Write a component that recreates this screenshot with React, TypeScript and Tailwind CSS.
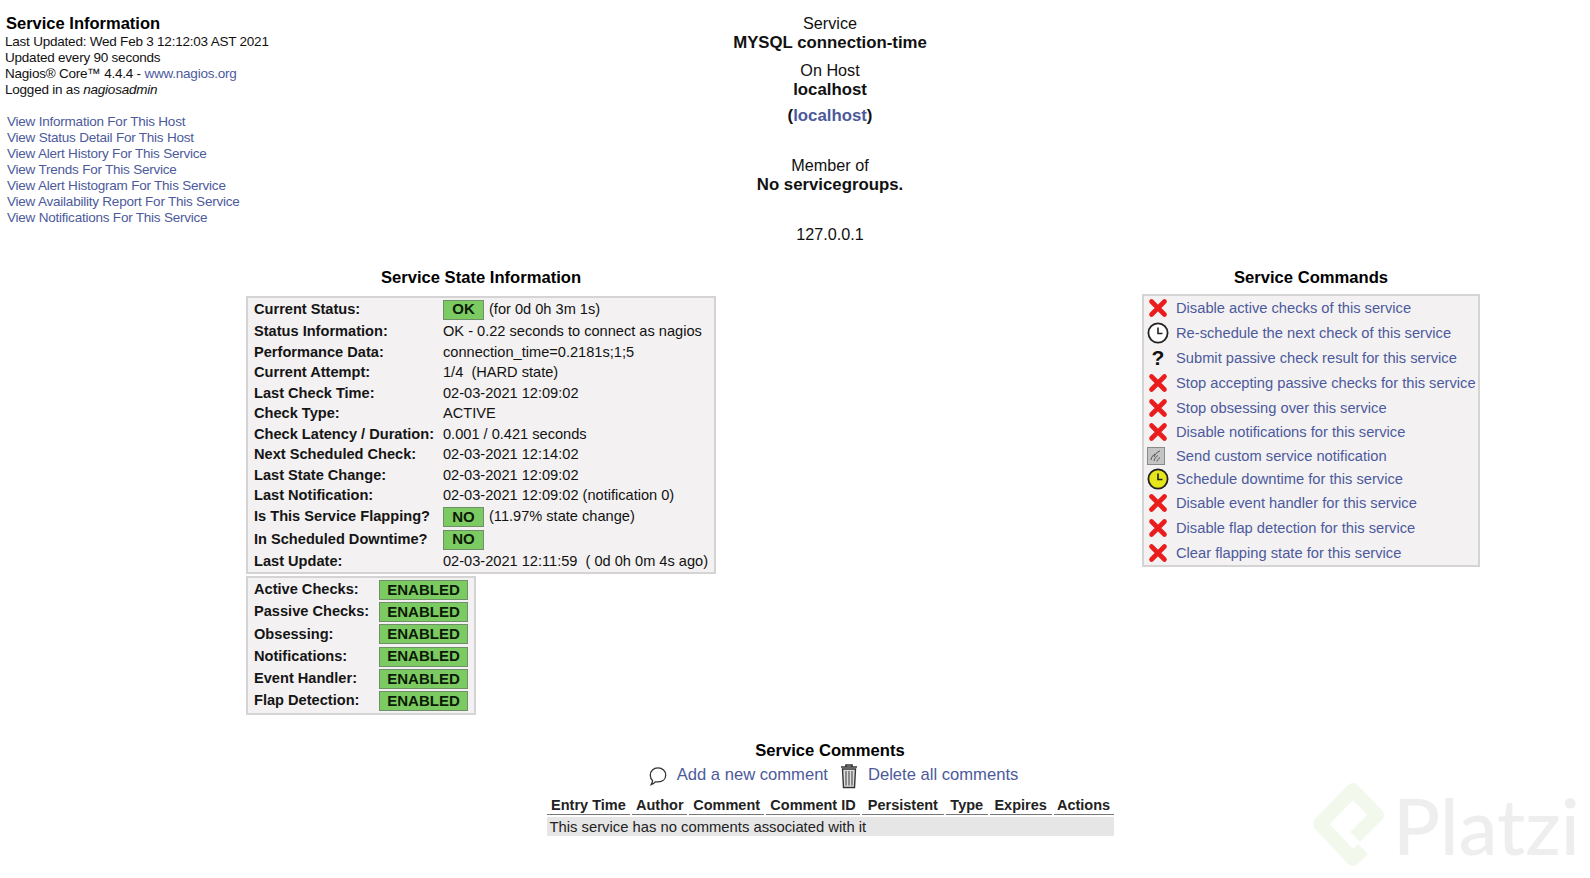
const linkColor = "text-[#4c5a9c]";

const infoLinks = [
  "View Information For This Host",
  "View Status Detail For This Host",
  "View Alert History For This Service",
  "View Trends For This Service",
  "View Alert Histogram For This Service",
  "View Availability Report For This Service",
  "View Notifications For This Service",
];

function Badge({ children, width }: { children: string; width: string }) {
  return (
    <span className={`${width} h-[20px] flex items-center justify-center bg-[#7ccb62] border border-[#6f8f68] font-bold text-[15px] text-[#0c1a08]`}>
      {children}
    </span>
  );
}

const stateRows = [
  { h: "h-[23px]", label: "Current Status:", badge: "OK", value: "(for 0d 0h 3m 1s)" },
  { h: "h-[21px]", label: "Status Information:", value: "OK - 0.22 seconds to connect as nagios" },
  { h: "h-[21px]", label: "Performance Data:", value: "connection_time=0.2181s;1;5" },
  { h: "h-[20px]", label: "Current Attempt:", value: "1/4  (HARD state)" },
  { h: "h-[21px]", label: "Last Check Time:", value: "02-03-2021 12:09:02" },
  { h: "h-[20px]", label: "Check Type:", value: "ACTIVE" },
  { h: "h-[21px]", label: "Check Latency / Duration:", value: "0.001 / 0.421 seconds" },
  { h: "h-[20px]", label: "Next Scheduled Check:", value: "02-03-2021 12:14:02" },
  { h: "h-[21px]", label: "Last State Change:", value: "02-03-2021 12:09:02" },
  { h: "h-[20px]", label: "Last Notification:", value: "02-03-2021 12:09:02 (notification 0)" },
  { h: "h-[22px]", label: "Is This Service Flapping?", badge: "NO", value: "(11.97% state change)" },
  { h: "h-[23px]", label: "In Scheduled Downtime?", badge: "NO" },
  { h: "h-[21px]", label: "Last Update:", value: "02-03-2021 12:11:59  ( 0d 0h 0m 4s ago)" },
];

const enabledRows = ["Active Checks:", "Passive Checks:", "Obsessing:", "Notifications:", "Event Handler:", "Flap Detection:"];

function RedX() {
  return (
    <svg viewBox="0 0 20 20" className="w-[20px] h-[20px]">
      <path d="M3.5 3.5 L16.5 16.5 M16.5 3.5 L3.5 16.5" stroke="#ea1c1c" strokeWidth="4.6" strokeLinecap="round" fill="none" />
    </svg>
  );
}

function ClockIcon({ fill }: { fill: string }) {
  return (
    <svg viewBox="0 0 22 22" className="w-[22px] h-[22px]">
      <circle cx="11" cy="11" r="9.6" fill={fill} stroke="#222" strokeWidth="1.8" />
      <path d="M11 5.5 V11.5 H15.5" stroke="#222" strokeWidth="1.6" fill="none" />
    </svg>
  );
}

function NotifyIcon() {
  return (
    <svg viewBox="0 0 18 18" className="w-[18px] h-[18px] mr-[4px]">
      <rect x="0.5" y="0.5" width="17" height="17" fill="#c4c4c4" stroke="#8a8a8a" />
      <path d="M4 13 C4.5 10 6 8 8 7 M7 14 C7.5 11.5 9 9.5 11 8.5 M10 14.5 C10.5 13 11.5 11.5 13 10.5 M7 10 C8 7 10 5 13 4" stroke="#555" strokeWidth="1" fill="none" />
    </svg>
  );
}

function QuestionIcon() {
  return <span className="font-bold text-[21px] leading-none text-[#111]">?</span>;
}

const commands = [
  { h: "h-[24.8px]", icon: <RedX />, text: "Disable active checks of this service" },
  { h: "h-[24.8px]", icon: <ClockIcon fill="#fff" />, text: "Re-schedule the next check of this service" },
  { h: "h-[24.8px]", icon: <QuestionIcon />, text: "Submit passive check result for this service" },
  { h: "h-[24.8px]", icon: <RedX />, text: "Stop accepting passive checks for this service" },
  { h: "h-[24.8px]", icon: <RedX />, text: "Stop obsessing over this service" },
  { h: "h-[24.8px]", icon: <RedX />, text: "Disable notifications for this service" },
  { h: "h-[22px]", icon: <NotifyIcon />, text: "Send custom service notification" },
  { h: "h-[24px]", icon: <ClockIcon fill="#e6e61a" />, text: "Schedule downtime for this service" },
  { h: "h-[24.8px]", icon: <RedX />, text: "Disable event handler for this service" },
  { h: "h-[24.8px]", icon: <RedX />, text: "Disable flap detection for this service" },
  { h: "h-[24.8px]", icon: <RedX />, text: "Clear flapping state for this service" },
];

const commentCols = [
  { w: "w-[84px]", label: "Entry Time" },
  { w: "w-[55px]", label: "Author" },
  { w: "w-[75px]", label: "Comment" },
  { w: "w-[94px]", label: "Comment ID" },
  { w: "w-[82px]", label: "Persistent" },
  { w: "w-[42px]", label: "Type" },
  { w: "w-[62px]", label: "Expires" },
  { w: "w-[60px]", label: "Actions" },
];

export default function App() {
  return (
    <div className="relative w-[1590px] h-[878px] overflow-hidden bg-white text-[#111] font-['Liberation_Sans',Arial,sans-serif] whitespace-pre">
      {/* header */}
      <div className="flex h-[269px]">
        <div className="w-[660px] pl-[5px] pt-[14px]">
          <div className="font-bold text-[16.5px] leading-[19px] pl-[1px] text-black">Service Information</div>
          <div className="text-[13.5px] tracking-[-0.22px] leading-[16.1px] mt-[1px]">
            <div>Last Updated: Wed Feb 3 12:12:03 AST 2021</div>
            <div>Updated every 90 seconds</div>
            <div>Nagios® Core™ 4.4.4 - <span className={linkColor}>www.nagios.org</span></div>
            <div>Logged in as <i>nagiosadmin</i></div>
          </div>
          <div className={`text-[13.5px] tracking-[-0.22px] leading-[16px] mt-[16px] pl-[2px] ${linkColor}`}>
            {infoLinks.map((l) => (
              <div key={l}>{l}</div>
            ))}
          </div>
        </div>
        <div className="w-[340px] pt-[13px] text-center text-[16.2px] leading-[20px]">
          <div>Service</div>
          <div className="font-bold text-[16.8px]">MYSQL connection-time</div>
          <div className="mt-[7px]">On Host</div>
          <div className="font-bold text-[16.8px]">localhost</div>
          <div className="font-bold text-[16.8px] mt-[6px]">(<span className={linkColor}>localhost</span>)</div>
          <div className="mt-[29px]">Member of</div>
          <div className="font-bold text-[16.8px]">No servicegroups.</div>
          <div className="mt-[29px]">127.0.0.1</div>
        </div>
      </div>

      {/* state + commands */}
      <div className="flex h-[472px]">
        <div className="ml-[246px] w-[470px]">
          <div className="h-[27px] text-center font-bold text-[16.6px] leading-[18px] text-black">Service State Information</div>
          <div className="border-2 border-[#d4d4d4] bg-[#f3f1f2] text-[14.6px] pl-[6px]">
            {stateRows.map((r) => (
              <div key={r.label} className={`flex items-center ${r.h}`}>
                <div className="w-[189px] font-bold text-[#151515]">{r.label}</div>
                {r.badge && <Badge width="w-[41px]">{r.badge}</Badge>}
                {r.value && <div className={r.badge ? "ml-[5px]" : ""}>{r.value}</div>}
              </div>
            ))}
          </div>
          <div className="mt-[2px] w-[230px] border-2 border-[#d4d4d4] bg-[#f3f1f2] text-[14.6px] pl-[6px] py-[1px]">
            {enabledRows.map((l) => (
              <div key={l} className="flex items-center h-[22.2px]">
                <div className="w-[125px] font-bold text-[#151515]">{l}</div>
                <Badge width="w-[89px]">ENABLED</Badge>
              </div>
            ))}
          </div>
        </div>
        <div className="ml-[426px] w-[338px]">
          <div className="h-[25px] text-center font-bold text-[16.6px] leading-[18px] text-black">Service Commands</div>
          <div className="border-2 border-[#d4d4d4] bg-[#f3f1f2] text-[14.7px]">
            {commands.map((c) => (
              <div key={c.text} className={`flex items-center ${c.h}`}>
                <div className="w-[32px] flex justify-center pr-[4px]">{c.icon}</div>
                <div className={linkColor}>{c.text}</div>
              </div>
            ))}
          </div>
        </div>
      </div>

      {/* comments */}
      <div className="flex flex-col items-center ml-[70px] w-[1520px]">
        <div className="font-bold text-[16.6px] leading-[20px] text-black">Service Comments</div>
        <div className={`flex items-center h-[29px] pl-[6px] text-[16.6px] ${linkColor}`}>
          <svg viewBox="0 0 22 24" className="w-[20px] h-[22px] mr-[9px]">
            <path d="M11 3 C16 3 19.5 6.5 19.5 11 C19.5 15.5 16 18.5 11 18.5 L8 18.5 C7 20 5.5 21 3.5 21.5 C4.5 20 5 19 5 17 C3 15.5 2.5 13 2.5 11 C2.5 6.5 6 3 11 3 Z" fill="#fff" stroke="#333" strokeWidth="1.4" />
          </svg>
          <span>Add a new comment</span>
          <svg viewBox="0 0 20 26" className="w-[20px] h-[26px] ml-[11px] mr-[9px]">
            <path d="M2 4 H18 M7 4 V2 H13 V4" stroke="#333" strokeWidth="1.6" fill="none" />
            <path d="M3.5 6 H16.5 L15.5 24.5 H4.5 Z" fill="#ddd" stroke="#333" strokeWidth="1.4" />
            <path d="M7 8 V22.5 M10 8 V22.5 M13 8 V22.5" stroke="#555" strokeWidth="1.2" />
          </svg>
          <span>Delete all comments</span>
        </div>
        <div className="w-[567px] mt-[5px]">
          <div className="flex gap-[2px]">
            {commentCols.map((c) => (
              <div key={c.label} className={`${c.w} h-[20px] border-b border-[#777] text-center font-bold text-[14.5px] leading-[20px] text-[#222]`}>
                {c.label}
              </div>
            ))}
          </div>
          <div className="mt-[2px] h-[19px] bg-[#e6e6e6] pl-[3px] text-[14.8px] leading-[20px] text-[#222]">
            This service has no comments associated with it
          </div>
        </div>
      </div>

      {/* watermark */}
      <div className="absolute left-[1310px] top-[781px] flex items-center">
        <svg viewBox="0 0 75 88" className="w-[75px] h-[88px]">
          <path d="M45 56 L67 34 L43 9 L10 43 L43 78 L53 68" fill="none" stroke="#f3f8ec" strokeWidth="14" strokeLinejoin="round" />
        </svg>
        <span className="ml-[8px] font-['Lato',sans-serif] font-medium text-[78px] leading-[88px] text-[#eeeeee]">Platzi</span>
      </div>
    </div>
  );
}
